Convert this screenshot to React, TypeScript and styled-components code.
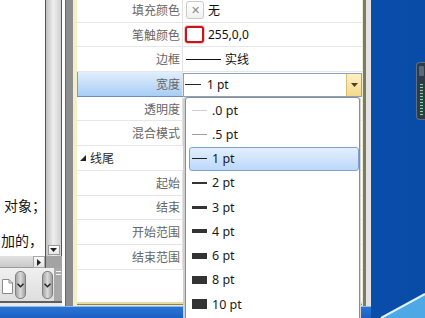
import React from 'react';
import styled, { createGlobalStyle } from 'styled-components';

const Global = createGlobalStyle`
  html, body { margin: 0; padding: 0; }
  body { width: 425px; height: 318px; overflow: hidden; background: #0a52b1; }
  * { box-sizing: border-box; }
`;

const Screen = styled.div`
  position: relative;
  width: 425px;
  height: 318px;
  overflow: hidden;
  display: flex;
  background: linear-gradient(to right, #0b56b6, #094ca8);
  font-family: "Noto Sans", "Noto Sans CJK SC", sans-serif;
`;

const WindowsColumn = styled.div`
  width: 371px;
  display: flex;
  flex-direction: column;
`;

const Workspace = styled.div`
  height: 306px;
  display: flex;
`;

const Taskbar = styled.div`
  flex: 1;
  background: linear-gradient(#2a74d4, #1a60c2);
  border-top: 1px solid #8fbbe9;
`;

const Desktop = styled.div`
  flex: 1;
  position: relative;
`;

/* ---------- left document window ---------- */
const LeftPane = styled.div`
  width: 62px;
  display: flex;
  flex-direction: column;
`;

const DocRow = styled.div`
  height: 256px;
  display: flex;
`;

const Doc = styled.div`
  width: 45px;
  background: #fff;
  overflow: hidden;
  padding-top: 188px;
  font-family: "Noto Sans CJK SC", sans-serif;
  font-size: 14px;
  line-height: 35px;
  color: #141414;
  white-space: nowrap;
`;

const DocLine = styled.div<{ $indent: number }>`
  margin-left: ${p => p.$indent}px;
`;

const VScroll = styled.div`
  width: 17px;
  border-left: 1px solid #555;
  border-right: 1px solid #555;
  background: linear-gradient(to right, #c2c2c2, #eeeeee 50%, #cfcfcf);
  display: flex;
  flex-direction: column;
  justify-content: flex-end;
  align-items: center;
  padding-bottom: 1px;
`;

const ArrowButton = styled.div`
  width: 12px;
  height: 10px;
  background: linear-gradient(#ffffff, #e6e6e6);
  border: 1px solid #9a9a9a;
  display: flex;
  align-items: center;
  justify-content: center;
`;

const HScrollRow = styled.div`
  height: 12px;
  display: flex;
`;

const HTrack = styled.div`
  width: 33px;
  background: linear-gradient(#e2e2e2, #c9c9c9);
  border-bottom: 1px solid #9d9d9d;
`;

const HArrow = styled.div`
  width: 12px;
  background: linear-gradient(#fbfbfb, #e2e2e2);
  border: 1px solid #a8a8a8;
  display: flex;
  align-items: center;
  justify-content: center;
`;

const ScrollCorner = styled.div`
  flex: 1;
  background: #a3a3a3;
  border-left: 1px solid #555;
`;

const Toolbar = styled.div`
  height: 33px;
  display: flex;
  align-items: center;
  background: linear-gradient(#f0f0f0, #dedede);
  padding-left: 2px;
`;

const DocIcon = styled.div`
  width: 11px;
  height: 15px;
  margin-top: 3px;
  display: flex;
`;

const Pill = styled.div<{ $ml: number }>`
  margin-left: ${p => p.$ml}px;
  width: 11px;
  height: 28px;
  border: 1px solid #808080;
  border-radius: 5px;
  background: linear-gradient(to right, #a5a5a5, #dadada 50%, #a2a2a2);
  display: flex;
  align-items: center;
  justify-content: center;
  padding-top: 2px;
`;

const Grip = styled.div`
  margin-left: 1px;
  align-self: stretch;
  flex: 1;
  background: #a9a9a9;
  display: flex;
  justify-content: center;
  padding-top: 3px;
`;

const GripMark = styled.div`
  width: 5px;
  height: 4px;
  border-top: 1px solid #f4f4f4;
  border-bottom: 1px solid #f4f4f4;
`;

const LeftFooter = styled.div`
  flex: 1;
  background: linear-gradient(#5e5e5e 0 2px, #e9e9e9 2px);
`;

/* ---------- splitter & frames ---------- */
const Splitter = styled.div`
  width: 15px;
  background: linear-gradient(
    to right,
    #ffffff 0 3px,
    #676767 3px 4px,
    #8d8d8d 4px 11px,
    #f3efc8 11px 15px
  );
`;

const RightFrame = styled.div`
  width: 9px;
  background: linear-gradient(
    to right,
    #eeebd2 0 1px,
    #7d7b60 1px 4px,
    #e3e3e3 4px 9px
  );
`;

/* ---------- property grid ---------- */
const Panel = styled.div`
  width: 285px;
  display: flex;
  flex-direction: column;
  background: #fff;
`;

const Rows = styled.div`
  flex: 1;
  margin-top: -2px;
  overflow: hidden;
  font-size: 12px;
`;

const PanelFooter = styled.div`
  height: 4px;
  background: linear-gradient(#e8dca6 0 2px, #8c825c 2px 3px, #efe9c9 3px);
`;

const Row = styled.div`
  height: 24.7px;
  display: grid;
  grid-template-columns: 106px 1fr;
  border-bottom: 1px solid #e6e6e6;
`;

const Label = styled.div<{ $selected?: boolean }>`
  display: flex;
  align-items: center;
  justify-content: flex-end;
  padding-right: 2px;
  color: #666;
  border-right: 1px solid #e2e2e2;
  background: ${p => (p.$selected ? 'linear-gradient(#e2eefc, #a8cdf5)' : 'transparent')};
  box-shadow: ${p => (p.$selected ? 'inset 1px 0 0 #7d9dc2, 0 1px 0 #6f8fb5' : 'none')};
`;

const Value = styled.div`
  display: flex;
  align-items: center;
  gap: 4px;
  padding-left: 3px;
  color: #111;
`;

const EmptySwatch = styled.div`
  width: 18px;
  height: 18px;
  border: 1px solid #c9c9c9;
  border-radius: 3px;
  background: linear-gradient(#ffffff, #f1f1f1);
  display: flex;
  align-items: center;
  justify-content: center;
  color: #8a8a8a;
  font-size: 11px;
  line-height: 1;
`;

const ColorSwatch = styled.div<{ $color: string }>`
  width: 19px;
  height: 17px;
  border: 2px solid ${p => p.$color};
  border-radius: 3px;
  background: #fff;
  margin-left: -1px;
  box-shadow: 0 0 0 1px #f0c8c8;
`;

const StrokeSample = styled.div<{ $w: number; $h: number; $c: string }>`
  width: ${p => p.$w}px;
  height: ${p => p.$h}px;
  background: ${p => p.$c};
  flex: none;
`;

const Combo = styled.div`
  grid-column: 2;
  display: flex;
  border: 1px solid #8aa2c0;
  background: #fff;
  margin-bottom: -1px;
  margin-top: 1px;
`;

const ComboText = styled.div`
  flex: 1;
  display: flex;
  align-items: center;
  gap: 6px;
  padding-left: 1px;
  color: #111;
`;

const ComboButton = styled.div`
  width: 15px;
  background: linear-gradient(#fdf1c2, #f4d98a);
  border-left: 1px solid #d9bf72;
  display: flex;
  align-items: center;
  justify-content: center;
`;

const CategoryRow = styled.div`
  height: 24.7px;
  display: flex;
  align-items: center;
  gap: 4px;
  padding-left: 3px;
  border-bottom: 1px solid #e6e6e6;
  color: #2a2a2a;
`;

/* ---------- dropdown list ---------- */
const DropList = styled.div`
  position: absolute;
  left: 185px;
  top: 97px;
  width: 175px;
  height: 240px;
  background: #fff;
  border: 1px solid #8d8d8d;
  border-radius: 3px 3px 0 0;
  box-shadow: -2px 0 0 #cfcfcf, 1px 0 0 #d6d6d6;
  font-size: 12.5px;
  z-index: 5;
`;

const Item = styled.div<{ $selected?: boolean }>`
  height: 24.25px;
  margin-left: 3px;
  display: flex;
  align-items: center;
  gap: 5px;
  padding-left: 2px;
  color: #1a1a1a;
  border: 1px solid ${p => (p.$selected ? '#7da2ce' : 'transparent')};
  border-radius: 3px;
  background: ${p => (p.$selected ? 'linear-gradient(#e3effd, #bcd8fb)' : 'transparent')};
`;

/* ---------- desktop bits ---------- */
const Gadget = styled.div`
  position: absolute;
  right: 0;
  top: 62px;
  width: 9px;
  height: 58px;
  border-radius: 4px 0 0 4px;
  background: #2d3a48;
  border: 1px solid #5f6e80;
  border-right: none;
  display: flex;
  flex-direction: column;
  align-items: center;
  padding-top: 3px;
  gap: 8px;
`;

const GadgetTop = styled.div`
  width: 5px;
  height: 10px;
  background: #58697c;
  border-radius: 1px;
`;

const GadgetBars = styled.div`
  width: 3px;
  flex: 1;
  margin-bottom: 3px;
  background: repeating-linear-gradient(#86d2a8 0 1px, #2f4a44 1px 3px);
`;

const Swirl = styled.svg`
  position: absolute;
  right: 0;
  bottom: 0;
  z-index: 6;
`;

const items: { label: string; h: number; c: string; sel?: boolean }[] = [
  { label: '.0 pt', h: 1, c: '#cfcfcf' },
  { label: '.5 pt', h: 1, c: '#9c9c9c' },
  { label: '1 pt', h: 1, c: '#222', sel: true },
  { label: '2 pt', h: 2, c: '#333' },
  { label: '3 pt', h: 3, c: '#333' },
  { label: '4 pt', h: 4, c: '#333' },
  { label: '6 pt', h: 6, c: '#333' },
  { label: '8 pt', h: 8, c: '#333' },
  { label: '10 pt', h: 10, c: '#333' },
];

const Chevron = () => (
  <svg width="7" height="5" viewBox="0 0 7 5">
    <polyline points="0.5,0.8 3.5,3.8 6.5,0.8" fill="none" stroke="#222" strokeWidth="1.4" />
  </svg>
);

export default function App() {
  return (
    <>
      <Global />
      <Screen>
        <WindowsColumn>
          <Workspace>
            <LeftPane>
              <DocRow>
                <Doc>
                  <DocLine $indent={4}>对象；</DocLine>
                  <DocLine $indent={1}>加的，</DocLine>
                </Doc>
                <VScroll>
                  <ArrowButton>
                    <svg width="7" height="4" viewBox="0 0 7 4">
                      <polygon points="0,0 7,0 3.5,4" fill="#222" />
                    </svg>
                  </ArrowButton>
                </VScroll>
              </DocRow>
              <HScrollRow>
                <HTrack />
                <HArrow>
                  <svg width="4" height="7" viewBox="0 0 4 7">
                    <polygon points="0,0 4,3.5 0,7" fill="#222" />
                  </svg>
                </HArrow>
                <ScrollCorner />
              </HScrollRow>
              <Toolbar>
                <DocIcon>
                  <svg width="11" height="15" viewBox="0 0 11 15">
                    <path d="M0.5 0.5 H7 L10.5 4 V14.5 H0.5 Z" fill="#fff" stroke="#8a8a8a" />
                    <path d="M7 0.5 V4 H10.5" fill="none" stroke="#8a8a8a" />
                  </svg>
                </DocIcon>
                <Pill $ml={2}>
                  <Chevron />
                </Pill>
                <Pill $ml={16}>
                  <Chevron />
                </Pill>
                <Grip>
                  <GripMark />
                </Grip>
              </Toolbar>
              <LeftFooter />
            </LeftPane>
            <Splitter />
            <Panel>
              <Rows>
                <Row>
                  <Label>填充颜色</Label>
                  <Value>
                    <EmptySwatch>✕</EmptySwatch>
                    <span>无</span>
                  </Value>
                </Row>
                <Row>
                  <Label>笔触颜色</Label>
                  <Value>
                    <ColorSwatch $color="#c8141c" />
                    <span>255,0,0</span>
                  </Value>
                </Row>
                <Row>
                  <Label>边框</Label>
                  <Value>
                    <StrokeSample $w={35} $h={1} $c="#111" />
                    <span>实线</span>
                  </Value>
                </Row>
                <Row>
                  <Label $selected>宽度</Label>
                  <Combo>
                    <ComboText>
                      <StrokeSample $w={16} $h={1} $c="#222" />
                      <span>1 pt</span>
                    </ComboText>
                    <ComboButton>
                      <svg width="7" height="4" viewBox="0 0 7 4">
                        <polygon points="0,0 7,0 3.5,4" fill="#4a4030" />
                      </svg>
                    </ComboButton>
                  </Combo>
                </Row>
                <Row>
                  <Label>透明度</Label>
                  <Value />
                </Row>
                <Row>
                  <Label>混合模式</Label>
                  <Value />
                </Row>
                <CategoryRow>
                  <svg width="6" height="6" viewBox="0 0 6 6">
                    <polygon points="6,0 6,6 0,6" fill="#222" />
                  </svg>
                  <span>线尾</span>
                </CategoryRow>
                <Row>
                  <Label>起始</Label>
                  <Value />
                </Row>
                <Row>
                  <Label>结束</Label>
                  <Value />
                </Row>
                <Row>
                  <Label>开始范围</Label>
                  <Value />
                </Row>
                <Row>
                  <Label>结束范围</Label>
                  <Value />
                </Row>
              </Rows>
              <PanelFooter />
            </Panel>
            <RightFrame />
          </Workspace>
          <Taskbar />
        </WindowsColumn>
        <Desktop>
          <Gadget>
            <GadgetTop />
            <GadgetBars />
          </Gadget>
        </Desktop>
        <DropList>
          {items.map(it => (
            <Item key={it.label} $selected={it.sel}>
              <StrokeSample $w={15} $h={it.h} $c={it.c} />
              <span>{it.label}</span>
            </Item>
          ))}
        </DropList>
        <Swirl width="70" height="26" viewBox="0 0 70 26">
          <polygon points="26,26 70,2 70,26" fill="#4ea8e6" />
          <polyline points="26,26 70,2" fill="none" stroke="#dff2ff" strokeWidth="2" />
        </Swirl>
      </Screen>
    </>
  );
}
